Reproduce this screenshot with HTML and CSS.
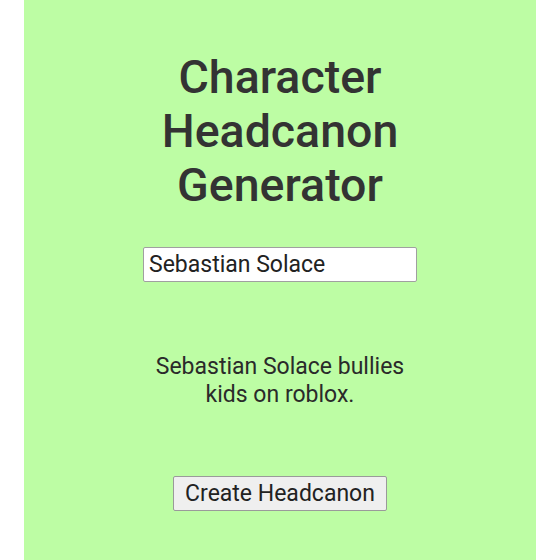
FILE: index.html
```html
<!DOCTYPE html>
<html lang="en">
<head>
    <meta charset="UTF-8">
    <meta name="viewport" content="width=device-width, initial-scale=1.0">
    <title>Character Headcanon Generator</title>
    <link rel="stylesheet" href="styles.css">
</head>
<body>

    <div class="container">
        <h1>Character Headcanon Generator</h1>

        <input type="text" id="name" value="Sebastian Solace">

        <p id="headcanon" class="result">Sebastian Solace bullies kids on roblox.</p>

        <button type="button">Create Headcanon</button>
    </div>

</body>
</html>
```

FILE: styles.css
```css
body {
    margin: 0;
    padding: 0;
    background: #ffffff;
    font-family: Roboto, "Liberation Sans", sans-serif;
}
.container {
    width: 512px;
    min-height: 560px;
    margin: 0 auto;
    background-color: #bdfda4;
    display: flex;
    flex-direction: column;
    align-items: center;
    box-sizing: border-box;
    padding-top: 50px;
}
h1 {
    width: 300px;
    margin: 0;
    text-align: center;
    font-size: 46.5px;
    font-weight: 500;
    line-height: 54px;
    color: #333333;
}
input {
    width: 274px;
    height: 35px;
    box-sizing: border-box;
    margin-top: 35px;
    padding: 2px 5px;
    font-family: Roboto, "Liberation Sans", sans-serif;
    font-size: 23px;
    color: #222222;
    border: 1px solid #a0a0a0;
    border-radius: 2px;
    background: #ffffff;
}
.result {
    width: 280px;
    margin: 71px 0 0;
    text-align: center;
    font-size: 23px;
    line-height: 28px;
    color: #2a2a2a;
}
button {
    margin-top: 67px;
    height: 35px;
    padding: 0 11px;
    font-family: Roboto, "Liberation Sans", sans-serif;
    font-size: 23px;
    color: #222222;
    background-color: #efefef;
    border: 1px solid #9a9a9a;
    border-radius: 2px;
}
```
